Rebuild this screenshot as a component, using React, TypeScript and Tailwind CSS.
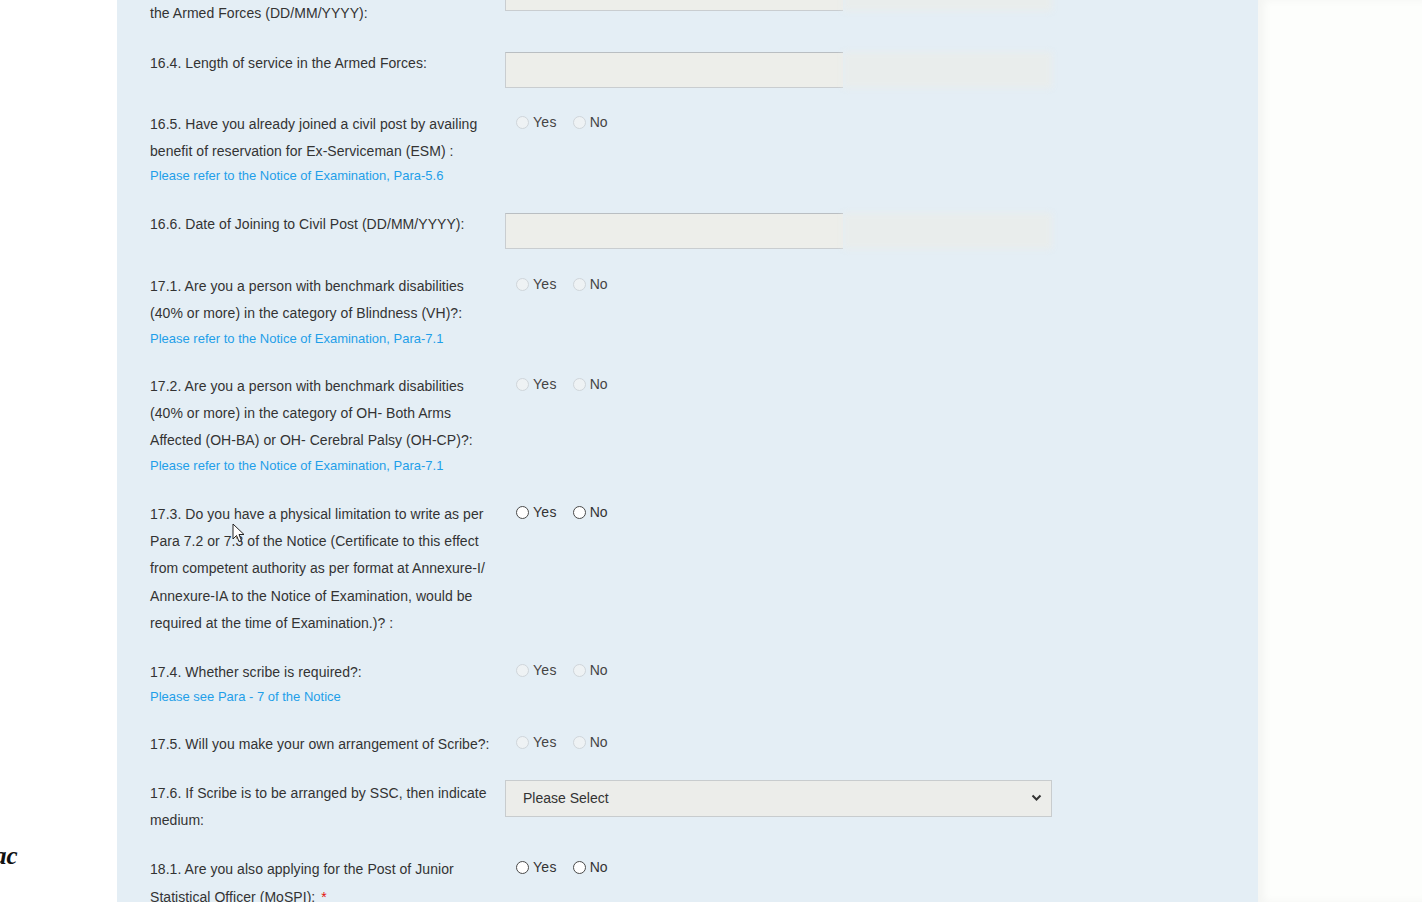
import React from 'react';

type Control = 'input' | 'radio' | 'radioOn' | 'select';

interface FieldRow {
  label: React.ReactNode;
  link?: string;
  control: Control;
  shift?: string;
}

const rows: FieldRow[] = [
  {
    label: (
      <>
        16.3. Date of Release from
        <br />
        the Armed Forces (DD/MM/YYYY):
      </>
    ),
    control: 'input',
  },
  { label: '16.4. Length of service in the Armed Forces:', control: 'input' },
  {
    label: '16.5. Have you already joined a civil post by availing benefit of reservation for Ex-Serviceman (ESM) :',
    link: 'Please refer to the Notice of Examination, Para-5.6',
    control: 'radio',
  },
  { label: '16.6. Date of Joining to Civil Post (DD/MM/YYYY):', control: 'input' },
  {
    label: '17.1. Are you a person with benchmark disabilities (40% or more) in the category of Blindness (VH)?:',
    link: 'Please refer to the Notice of Examination, Para-7.1',
    control: 'radio',
    shift: 'mt-[1px]',
  },
  {
    label:
      '17.2. Are you a person with benchmark disabilities (40% or more) in the category of OH- Both Arms Affected (OH-BA) or OH- Cerebral Palsy (OH-CP)?:',
    link: 'Please refer to the Notice of Examination, Para-7.1',
    control: 'radio',
    shift: '-mt-[1px]',
  },
  {
    label:
      '17.3. Do you have a physical limitation to write as per Para 7.2 or 7.3 of the Notice (Certificate to this effect from competent authority as per format at Annexure-I/ Annexure-IA to the Notice of Examination, would be required at the time of Examination.)? :',
    control: 'radioOn',
  },
  {
    label: '17.4. Whether scribe is required?:',
    link: 'Please see Para - 7 of the Notice',
    control: 'radio',
  },
  { label: '17.5. Will you make your own arrangement of Scribe?:', control: 'radio', shift: '-mt-[1px]' },
  {
    label: '17.6. If Scribe is to be arranged by SSC, then indicate medium:',
    control: 'select',
    shift: '-mt-[1px]',
  },
  {
    label: (
      <>
        18.1. Are you also applying for the Post of Junior Statistical Officer (MoSPI):{' '}
        <span className="ml-[2px] text-[#e3120b]">*</span>
      </>
    ),
    control: 'radioOn',
  },
];

function Dot({ active }: { active: boolean }) {
  return (
    <span
      className={`inline-block h-[13px] w-[13px] shrink-0 rounded-full border ${
        active ? 'border-[#4a4a4a] bg-white' : 'border-[#cfd5da] bg-[#eef2f4]'
      }`}
    />
  );
}

function YesNo({ active }: { active: boolean }) {
  return (
    <div className={`flex items-center pl-[11px] text-[14px] leading-[23px] ${active ? 'text-[#333]' : 'text-[#444]'}`}>
      <Dot active={active} />
      <span className="ml-[4px] tracking-[0.3px]">Yes</span>
      <span className="ml-[16px] flex items-center">
        <Dot active={active} />
      </span>
      <span className="ml-[4px]">No</span>
    </div>
  );
}

function TextBox() {
  return (
    <div className="mb-[1px] mt-[2px] flex h-[36px] w-[547px]">
      <div className="h-full w-[338px] border border-r-0 border-[#c9cdd0] border-t-[#b9bec2] bg-[#edeeea]" />
      <div className="h-full w-[209px] bg-[#e9edec] blur-[3px]" />
    </div>
  );
}

function SelectBox() {
  return (
    <div className="flex h-[37px] w-[547px] items-center justify-between border border-[#c8ccce] bg-[#ecedea] pl-[17px] pr-[9px] text-[14px] text-[#333]">
      <span>Please Select</span>
      <svg width="11" height="8" viewBox="0 0 11 8" className="text-[#333]">
        <path d="M1.5 1.5 L5.5 5.5 L9.5 1.5" fill="none" stroke="currentColor" strokeWidth="2" />
      </svg>
    </div>
  );
}

function ControlCell({ control }: { control: Control }) {
  if (control === 'input') return <TextBox />;
  if (control === 'select') return <SelectBox />;
  return <YesNo active={control === 'radioOn'} />;
}

export default function App() {
  return (
    <div className="relative flex h-[902px] w-full overflow-hidden bg-white font-['Liberation_Sans',Arial,sans-serif]">
      <div className="relative w-[117px] shrink-0 bg-white">
        <span className="absolute left-[-6px] top-[841px] font-['Liberation_Serif',serif] text-[25px] font-bold italic leading-[30px] text-[#111]">
          ac
        </span>
      </div>

      <div className="w-[1141px] shrink-0 bg-[#e4eef5] shadow-[-4px_0_8px_rgba(0,0,0,0.07)]">
        <div className="-mt-[27px] flex flex-col gap-[22px] pl-[33px]">
          {rows.map((row, i) => (
            <div key={i} className={`flex ${row.shift ?? ''}`}>
              <div className="w-[346px] shrink-0 pr-[2px]">
                <div className="text-[14px] leading-[27.3px] tracking-[0.05px] text-[#333]">{row.label}</div>
                {row.link && (
                  <div className="mb-[2px] text-[13px] leading-[22px] text-[#1f9fe9]">{row.link}</div>
                )}
              </div>
              <div className="ml-[9px]">
                <ControlCell control={row.control} />
              </div>
            </div>
          ))}
        </div>
      </div>

      <div className="flex-1 bg-[#fdfefc] shadow-[inset_6px_0_8px_rgba(0,0,0,0.04)]" />

      <svg
        className="absolute left-[232px] top-[523px]"
        width="14"
        height="21"
        viewBox="0 0 14 21"
      >
        <path d="M1 1 L1 16 L4.5 12.5 L7 18.5 L9.5 17.5 L7 11.5 L12 11.5 Z" fill="white" stroke="#222" strokeWidth="1" />
      </svg>
    </div>
  );
}
